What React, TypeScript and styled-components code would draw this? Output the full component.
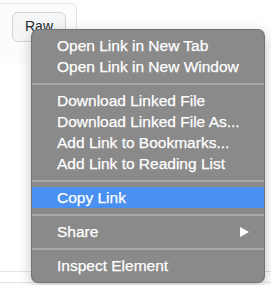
import styled, { createGlobalStyle } from "styled-components";

const GlobalStyle = createGlobalStyle`
  html, body {
    margin: 0;
    padding: 0;
    background: #ffffff;
  }
`;

const Page = styled.div`
  position: relative;
  width: 271px;
  height: 285px;
  overflow: hidden;
  font-family: "Liberation Sans", Arial, sans-serif;
`;

const FileHeader = styled.div`
  margin-top: 3px;
  width: 77px;
  height: 60px;
  box-sizing: border-box;
  border: 1px solid #e1e4e8;
  border-left: none;
  border-bottom: none;
  border-top-right-radius: 6px;
  background: #fcfcfd;
  padding: 8px 0 0 12px;
`;

const RawButton = styled.button`
  width: 54px;
  height: 30px;
  box-sizing: border-box;
  border: 1px solid #d1d5da;
  border-radius: 6px;
  background: #f5f6f8;
  color: #24292e;
  font-family: "Liberation Sans", Arial, sans-serif;
  font-size: 14px;
  padding: 0 0 2px;
`;

const TableLine = styled.div<{ $top: number }>`
  margin-top: ${(p) => p.$top}px;
  height: 1px;
  background: #e1e4e8;
`;

const Menu = styled.div`
  position: absolute;
  left: 32px;
  top: 30px;
  width: 232px;
  box-sizing: border-box;
  padding: 5px 0 6px;
  background: #8a8a8a;
  border-radius: 6px;
  box-shadow: 0 0 0 1px #737373, 0 4px 14px rgba(0, 0, 0, 0.28);
  color: #ffffff;
  font-size: 15.5px;
  -webkit-text-stroke: 0.25px #ffffff;
`;

const Item = styled.div<{ $active?: boolean }>`
  display: flex;
  align-items: center;
  justify-content: space-between;
  height: 21px;
  padding: 0 15px 0 25px;
  background: ${(p) => (p.$active ? "#4a90f0" : "transparent")};
  white-space: nowrap;
`;

const Separator = styled.div`
  height: 2px;
  margin: 6px 0 5px;
  background: #a9a9a9;
`;

const Arrow = styled.span`
  width: 0;
  height: 0;
  border-top: 5px solid transparent;
  border-bottom: 5px solid transparent;
  border-left: 9px solid #ffffff;
`;

export default function App() {
  return (
    <Page>
      <GlobalStyle />
      <FileHeader>
        <RawButton>Raw</RawButton>
      </FileHeader>
      <TableLine $top={208} />
      <TableLine $top={10} />
      <Menu>
        <Item>Open Link in New Tab</Item>
        <Item>Open Link in New Window</Item>
        <Separator />
        <Item>Download Linked File</Item>
        <Item>Download Linked File As...</Item>
        <Item>Add Link to Bookmarks...</Item>
        <Item>Add Link to Reading List</Item>
        <Separator />
        <Item $active>Copy Link</Item>
        <Separator />
        <Item>
          Share
          <Arrow />
        </Item>
        <Separator />
        <Item>Inspect Element</Item>
      </Menu>
    </Page>
  );
}
